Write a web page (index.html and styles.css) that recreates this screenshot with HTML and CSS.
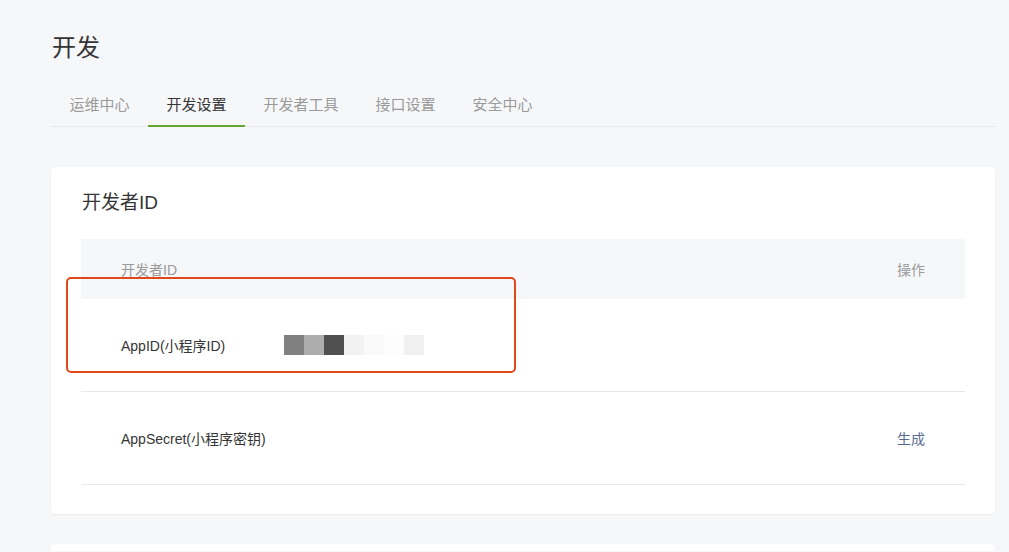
FILE: index.html
```html
<!DOCTYPE html>
<html lang="zh-CN">
<head>
<meta charset="utf-8">
<title>开发</title>
<link rel="stylesheet" href="styles.css">
</head>
<body>
<div class="page">
  <h1 class="page-title">开发</h1>
  <nav class="tabs">
    <a class="tab">运维中心</a>
    <a class="tab active">开发设置</a>
    <a class="tab">开发者工具</a>
    <a class="tab">接口设置</a>
    <a class="tab">安全中心</a>
  </nav>
  <section class="card">
    <h2 class="card-title">开发者ID</h2>
    <div class="table">
      <div class="row head">
        <span class="cell">开发者ID</span>
        <span class="cell"></span>
        <span class="cell action">操作</span>
      </div>
      <div class="row">
        <span class="cell">AppID(小程序ID)</span>
        <span class="cell"><span class="mosaic"><i class="m1"></i><i class="m2"></i><i class="m3"></i><i class="m4"></i><i class="m5"></i><i class="m6"></i><i class="m7"></i></span></span>
        <span class="cell action"></span>
      </div>
      <div class="row">
        <span class="cell">AppSecret(小程序密钥)</span>
        <span class="cell"></span>
        <span class="cell action"><a class="link">生成</a></span>
      </div>
      <div class="highlight"></div>
    </div>
  </section>
  <section class="card card-next"></section>
</div>
</body>
</html>
```
FILE: styles.css
```css
html, body {
  margin: 0;
  padding: 0;
  background: #f6f7f9;
  font-family: "Liberation Sans", "Noto Sans CJK SC", sans-serif;
  color: #353535;
  overflow: hidden;
}
.page {
  padding: 31px 14px 0 51px;
}
.page-title {
  margin: 0;
  font-size: 24px;
  line-height: 34px;
  font-weight: normal;
  color: #353535;
  padding-left: 1px;
}
.tabs {
  display: flex;
  margin-top: 29px;
  border-bottom: 1px solid #e7e7eb;
}
.tab {
  font-size: 15px;
  line-height: 22px;
  padding: 0 18.5px 9px;
  color: #9a9a9a;
  border-bottom: 2px solid transparent;
  margin-bottom: -1px;
}
.tab.active {
  color: #353535;
  border-bottom-color: #63a834;
}
.card {
  margin-top: 40px;
  background: #fff;
  border-radius: 4px;
  box-shadow: 0 1px 2px rgba(0, 0, 0, 0.06);
  padding: 22px 30px 29px;
}
.card-title {
  margin: 0 0 22px;
  padding-left: 1px;
  font-size: 19px;
  line-height: 28px;
  font-weight: normal;
  color: #353535;
}
.table {
  position: relative;
}
.row {
  display: grid;
  grid-template-columns: 163px 1fr auto;
  align-items: center;
  padding: 0 40px;
  height: 92px;
  border-bottom: 1px solid #e7e7eb;
  font-size: 14px;
}
.row.head {
  height: 60px;
  background: #f6f7f9;
  border-bottom: none;
  color: #9a9a9a;
}
.action {
  text-align: right;
}
.link {
  color: #576b95;
}
.mosaic {
  display: flex;
  height: 20px;
}
.mosaic i {
  width: 20px;
  height: 20px;
}
.m1 { background: #808080; }
.m2 { background: #adadad; }
.m3 { background: #505050; }
.m4 { background: #f2f2f2; }
.m5 { background: #fafafa; }
.m6 { background: #fcfcfc; }
.m7 { background: #f0f0f0; }
.highlight {
  position: absolute;
  left: -15px;
  top: 38px;
  width: 446px;
  height: 92px;
  border: 2px solid #e2471a;
  border-radius: 5px;
}
.card-next {
  margin-top: 30px;
  height: 7px;
  padding: 0;
  border-radius: 4px 4px 0 0;
}
```
